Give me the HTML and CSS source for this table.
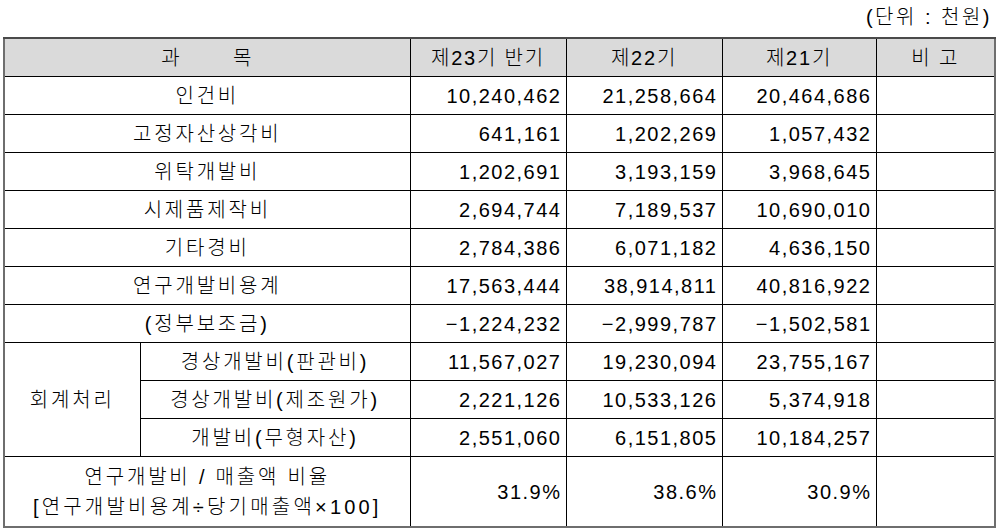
FILE: index.html
```html
<!DOCTYPE html>
<html lang="ko">
<head>
<meta charset="utf-8">
<link rel="stylesheet" href="styles.css">
</head>
<body>
<div class="page">
  <div class="unit">(단위 : 천원)</div>
  <table class="rd">
    <colgroup>
      <col class="c-a"><col class="c-b"><col class="c-n"><col class="c-n"><col class="c-n2"><col class="c-r">
    </colgroup>
    <thead>
      <tr class="head">
        <th colspan="2">과&nbsp;&nbsp;&nbsp;&nbsp;&nbsp;&nbsp;&nbsp;목</th>
        <th>제23기 반기</th>
        <th>제22기</th>
        <th>제21기</th>
        <th>비 고</th>
      </tr>
    </thead>
    <tbody>
      <tr><td colspan="2" class="lbl">인건비</td><td class="num">10,240,462</td><td class="num">21,258,664</td><td class="num">20,464,686</td><td></td></tr>
      <tr><td colspan="2" class="lbl">고정자산상각비</td><td class="num">641,161</td><td class="num">1,202,269</td><td class="num">1,057,432</td><td></td></tr>
      <tr><td colspan="2" class="lbl">위탁개발비</td><td class="num">1,202,691</td><td class="num">3,193,159</td><td class="num">3,968,645</td><td></td></tr>
      <tr><td colspan="2" class="lbl">시제품제작비</td><td class="num">2,694,744</td><td class="num">7,189,537</td><td class="num">10,690,010</td><td></td></tr>
      <tr><td colspan="2" class="lbl">기타경비</td><td class="num">2,784,386</td><td class="num">6,071,182</td><td class="num">4,636,150</td><td></td></tr>
      <tr><td colspan="2" class="lbl">연구개발비용계</td><td class="num">17,563,444</td><td class="num">38,914,811</td><td class="num">40,816,922</td><td></td></tr>
      <tr><td colspan="2" class="lbl">(정부보조금)</td><td class="num">−1,224,232</td><td class="num">−2,999,787</td><td class="num">−1,502,581</td><td></td></tr>
      <tr><td rowspan="3" class="lbl">회계처리</td><td class="lbl">경상개발비(판관비)</td><td class="num">11,567,027</td><td class="num">19,230,094</td><td class="num">23,755,167</td><td></td></tr>
      <tr><td class="lbl">경상개발비(제조원가)</td><td class="num">2,221,126</td><td class="num">10,533,126</td><td class="num">5,374,918</td><td></td></tr>
      <tr><td class="lbl">개발비(무형자산)</td><td class="num">2,551,060</td><td class="num">6,151,805</td><td class="num">10,184,257</td><td></td></tr>
      <tr class="tall"><td colspan="2" class="lbl">연구개발비 / 매출액 비율<br><span class="wide">[연구개발비용계÷당기매출액×100]</span></td><td class="num">31.9%</td><td class="num">38.6%</td><td class="num">30.9%</td><td></td></tr>
    </tbody>
  </table>
</div>
</body>
</html>
```

FILE: styles.css
```css
html, body {
  margin: 0;
  padding: 0;
  background: #fff;
}
.page {
  padding: 0 5px 0 3px;
  font-family: "Liberation Sans", "Noto Sans CJK KR", sans-serif;
  font-size: 20px;
  font-weight: 300;
  color: #000;
}
.unit {
  height: 37px;
  line-height: 34px;
  text-align: right;
  padding-right: 2px;
  letter-spacing: 2.5px;
}
.rd {
  width: 991px;
  border-collapse: collapse;
  table-layout: fixed;
  border: 2px solid #6e6e6e;
}
.c-a { width: 136px; }
.c-b { width: 270px; }
.c-n { width: 156px; }
.c-n2 { width: 154px; }
.c-r { width: 119px; }
.rd th, .rd td {
  border: 1px solid #000;
  height: 37px;
  padding: 0;
  line-height: 24px;
  font-weight: 300;
}
.head th {
  background: #dadada;
  text-align: center;
  border-top: 2px solid #4a4a4a;
  letter-spacing: 1.8px;
}
.lbl {
  text-align: center;
  letter-spacing: 2.8px;
}
.wide {
  letter-spacing: 3.2px;
}
.num {
  text-align: right;
  padding-right: 4px !important;
  letter-spacing: 1.5px;
}
.tall td {
  height: 69px;
  line-height: 30px;
}
```
